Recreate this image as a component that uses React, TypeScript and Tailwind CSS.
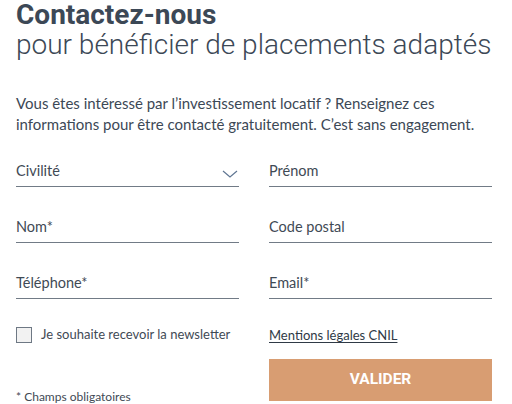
function Field({ label, select = false }: { label: string; select?: boolean }) {
  return (
    <div className="flex items-end justify-between h-[32px] border-b-[1.5px] border-[#717b86] pb-[8px]">
      <span className="text-[14.5px] text-[#3f4a55] leading-none">{label}</span>
      {select && (
        <svg width="16" height="8" viewBox="0 0 16 8" className="mr-[1px]">
          <polyline points="1,1 8,7 15,1" fill="none" stroke="#5f7592" strokeWidth="1.2" />
        </svg>
      )}
    </div>
  )
}

export default function App() {
  return (
    <div className="w-[512px] h-[404px] bg-white pl-[16px] pr-[20px] pt-[1px] overflow-hidden font-['Lato',sans-serif]">
      <h1 className="font-['Roboto',sans-serif] font-bold text-[28px] leading-[28px] text-[#3c4856]">Contactez-nous</h1>
      <h2 className="font-['Roboto',sans-serif] font-light text-[28px] leading-[32px] text-[#3c4856]">
        pour bénéficier de placements adaptés
      </h2>

      <p className="mt-[32px] text-[15px] leading-[21px] text-[#3c4856] pr-[6px]">
        Vous êtes intéressé par l’investissement locatif ? Renseignez ces informations pour être contacté gratuitement. C’est sans engagement.
      </p>

      <div className="grid grid-cols-2 gap-x-[30px] gap-y-[24px] mt-[20px]">
        <Field label="Civilité" select />
        <Field label="Prénom" />
        <Field label="Nom*" />
        <Field label="Code postal" />
        <Field label="Téléphone*" />
        <Field label="Email*" />
      </div>

      <div className="grid grid-cols-2 gap-x-[30px] mt-[27px]">
        <label className="flex items-center gap-[9px] h-[18px]">
          <span className="w-[16px] h-[16px] border-[1.5px] border-[#6e7884] bg-[#f2f2f2] shrink-0" />
          <span className="text-[13px] text-[#3f4a55]">Je souhaite recevoir la newsletter</span>
        </label>
        <a className="text-[13px] text-[#2f3a46] underline underline-offset-2 leading-[18px]">Mentions légales CNIL</a>
      </div>

      <div className="grid grid-cols-2 gap-x-[30px] mt-[15px]">
        <div className="flex items-end">
          <span className="text-[12px] text-[#3f4a55] leading-none mb-[-2px]">* Champs obligatoires</span>
        </div>
        <button className="h-[42px] bg-[#d89d72] text-white font-['Roboto',sans-serif] font-bold text-[15.5px]">VALIDER</button>
      </div>
    </div>
  )
}
